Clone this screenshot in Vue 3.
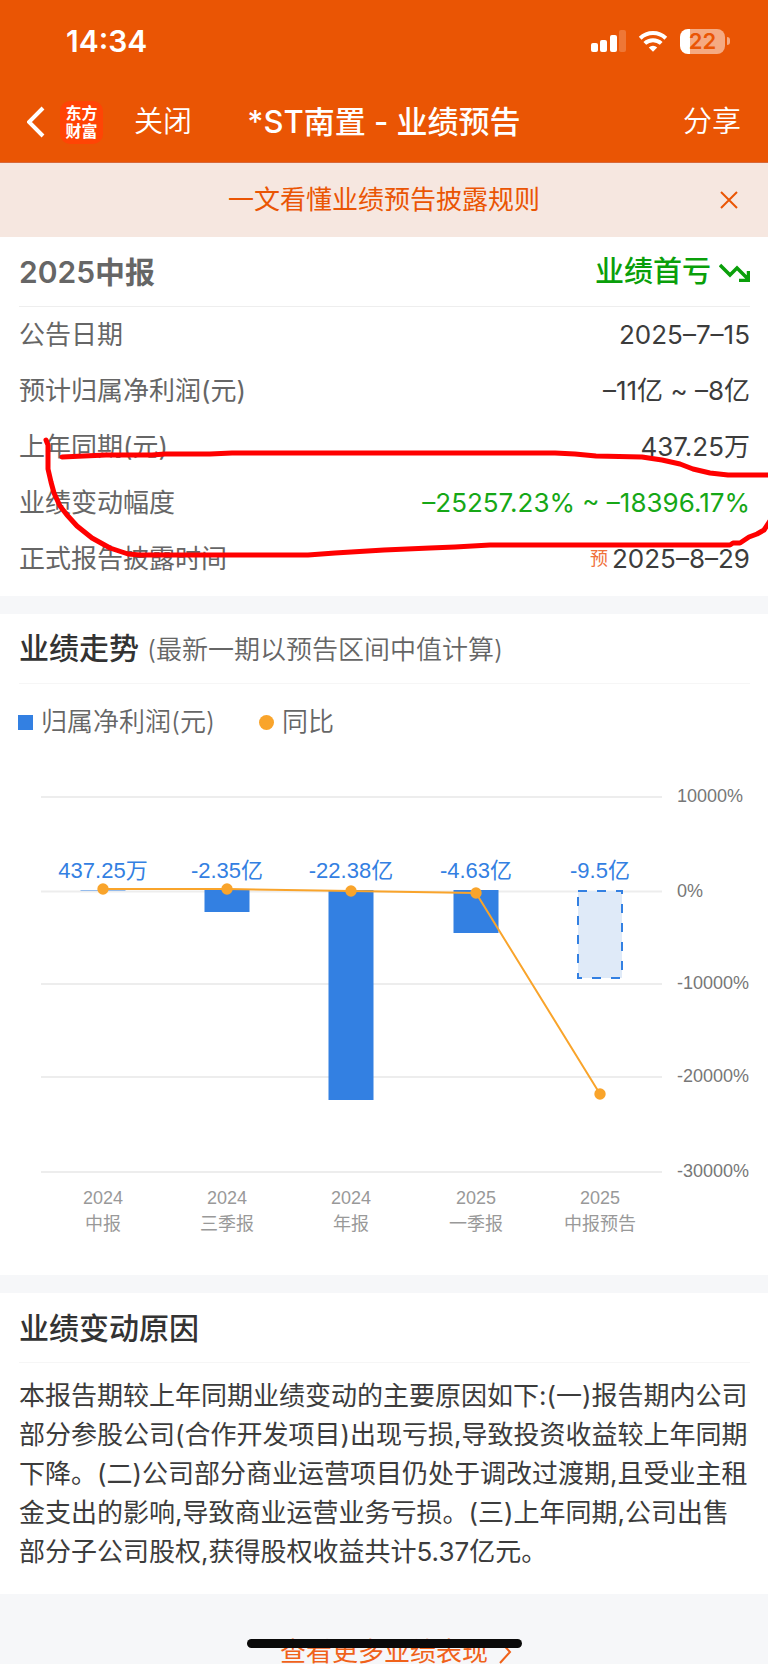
<template>
  <div class="page">
    <header class="header">
      <div class="status-bar">
        <span class="time">14:34</span>
        <div class="status-icons">
          <svg class="signal" viewBox="0 0 35 22" aria-hidden="true">
            <rect x="0" y="13" width="7" height="9" rx="2" />
            <rect x="9" y="10" width="7" height="12" rx="2" />
            <rect x="19" y="5" width="7" height="17" rx="2" />
            <rect x="28" y="0" width="7" height="22" rx="2" opacity="0.2" />
          </svg>
          <svg class="wifi" viewBox="0 0 30 22" aria-hidden="true">
            <path d="M2.2 8.2a18.5 18.5 0 0 1 25.6 0" />
            <path d="M6.8 13.4a12 12 0 0 1 16.4 0" />
            <path
              class="wifi-dot"
              d="M15 21.8l-4.2-4.3a6.1 6.1 0 0 1 8.4 0z"
            />
          </svg>
          <div class="battery">
            <div class="battery-body"><span>22</span></div>
            <div class="battery-cap"></div>
          </div>
        </div>
      </div>
      <nav class="nav">
        <div class="nav-left">
          <button class="icon-button" type="button" aria-label="返回">
            <svg class="back" viewBox="0 0 18 32" aria-hidden="true">
              <path d="M16 2L2 16l14 14" />
            </svg>
          </button>
          <div class="logo"><span>东方</span><span>财富</span></div>
          <button class="text-button" type="button">关闭</button>
        </div>
        <h1 class="nav-title">*ST南置 - 业绩预告</h1>
        <div class="nav-right">
          <button class="text-button" type="button">分享</button>
        </div>
      </nav>
    </header>

    <div class="banner">
      <a class="banner-link" href="#">一文看懂业绩预告披露规则</a>
      <button class="icon-button dismiss" type="button" aria-label="关闭提示">
        <svg viewBox="0 0 18 18" aria-hidden="true">
          <path d="M1 1l16 16M17 1L1 17" />
        </svg>
      </button>
    </div>

    <main>
      <section class="card summary">
        <div class="card-head">
          <h2 class="period">2025中报</h2>
          <div class="trend">
            <span>业绩首亏</span>
            <svg viewBox="0 0 31 20" aria-hidden="true">
              <path d="M1 3l10 10 7-7 12 12M29.5 9v9.5H20" />
            </svg>
          </div>
        </div>
        <dl class="rows">
          <div v-for="row in rows" :key="row.label" class="row">
            <dt>{{ row.label }}</dt>
            <dd :class="{ down: row.down }">
              <small v-if="row.tag">{{ row.tag }}</small>{{ row.value }}
            </dd>
          </div>
        </dl>
        <!-- Hand drawn circle -->
        <svg
          class="marker"
          viewBox="0 237 768 359"
          preserveAspectRatio="none"
          aria-hidden="true"
        >
          <path
            d="M62 457L106 455H152L165 454H210L232 453H555L575 454L596 456L642 457L662 460L680 464L693 469L710 473L728 475H772"
          />
          <path
            d="M46 440L48 445V469L51 482L54 493L60 506L67 515L77 526L92 538L110 548L128 554L140 555H308L335 553L384 550L430 548L455 547L490 545H730L733 543H740L749 537L757 534L764 530L770 521"
          />
        </svg>
      </section>

      <section class="card">
        <div class="card-head light">
          <h2>业绩走势 <small>(最新一期以预告区间中值计算)</small></h2>
        </div>
        <ul class="legend">
          <li><i class="square"></i>归属净利润(元)</li>
          <li><i class="dot"></i>同比</li>
        </ul>
        <svg class="chart" viewBox="0 0 768 515" role="img">
          <g v-for="tick in ticks" :key="tick.label">
            <line class="grid" x1="41" x2="662" :y1="tick.y" :y2="tick.y" />
            <text class="tick" x="677" :y="tick.y + 5">{{ tick.label }}</text>
          </g>
          <g v-for="(item, i) in items" :key="i">
            <rect
              :class="['bar', { forecast: item.forecast }]"
              :x="item.x - (item.forecast ? 22 : 22.5)"
              :y="item.forecast ? 131 : 130"
              :width="item.forecast ? 44 : 45"
              :height="item.height"
            />
            <text class="value" :x="item.x" y="118">{{ item.value }}</text>
            <text class="category" :x="item.x" y="444">{{ item.year }}</text>
            <text class="category" :x="item.x" y="470">{{ item.name }}</text>
          </g>
          <polyline class="line" :points="linePoints" />
          <circle
            v-for="(item, i) in items"
            :key="'p' + i"
            class="point"
            :cx="item.x"
            :cy="item.point"
            r="5.7"
          />
        </svg>
      </section>

      <section class="card">
        <div class="card-head light">
          <h2>业绩变动原因</h2>
        </div>
        <p class="reason">{{ reason }}</p>
      </section>
    </main>

    <footer class="footer">
      <a class="more" href="#">
        查看更多业绩表现
        <svg viewBox="0 0 14 24" aria-hidden="true">
          <path d="M2 1l10 11L2 23" />
        </svg>
      </a>
    </footer>
    <div class="home-bar"></div>
  </div>
</template>

<script setup>
import { computed } from "vue";

const rows = [
  { label: "公告日期", value: "2025–7–15" },
  { label: "预计归属净利润(元)", value: "–11亿 ~ –8亿" },
  { label: "上年同期(元)", value: "437.25万" },
  { label: "业绩变动幅度", value: "–25257.23% ~ –18396.17%", down: true },
  { label: "正式报告披露时间", value: "2025–8–29", tag: "预" },
];

const ticks = [
  { label: "10000%", y: 37 },
  { label: "0%", y: 131.5 },
  { label: "-10000%", y: 224 },
  { label: "-20000%", y: 317 },
  { label: "-30000%", y: 412 },
];

const items = [
  { x: 103, year: "2024", name: "中报", value: "437.25万", height: 0.5, point: 129 },
  { x: 227, year: "2024", name: "三季报", value: "-2.35亿", height: 22, point: 129 },
  { x: 351, year: "2024", name: "年报", value: "-22.38亿", height: 210, point: 131 },
  { x: 476, year: "2025", name: "一季报", value: "-4.63亿", height: 43, point: 133 },
  { x: 600, year: "2025", name: "中报预告", value: "-9.5亿", height: 87, point: 334, forecast: true },
];

const linePoints = computed(() =>
  items.map((item) => `${item.x},${item.point}`).join(" ")
);

const reason =
  "本报告期较上年同期业绩变动的主要原因如下:(一)报告期内公司部分参股公司(合作开发项目)出现亏损,导致投资收益较上年同期下降。(二)公司部分商业运营项目仍处于调改过渡期,且受业主租金支出的影响,导致商业运营业务亏损。(三)上年同期,公司出售部分子公司股权,获得股权收益共计5.37亿元。";
</script>

<style>
body {
  margin: 0;
  background: #f6f7f9;
}
</style>

<style scoped>
.page {
  font-family: Inter, "Noto Sans CJK SC", sans-serif;
  font-size: 26px;
  line-height: 36px;
  color: #3c3c3c;
}

h1,
h2,
p,
dl,
dd,
ul {
  margin: 0;
  padding: 0;
}

button {
  padding: 0;
  border: 0;
  background: none;
  color: inherit;
  font: inherit;
  cursor: pointer;
}

a {
  color: inherit;
  text-decoration: none;
}

svg {
  display: block;
  fill: none;
}

.header {
  background: #ea5504;
  border-bottom: 1px solid #d8693a;
  color: #fff;
}

.status-bar {
  display: flex;
  align-items: center;
  justify-content: space-between;
  height: 82px;
  padding: 0 38px 0 66px;
}

.time {
  font-size: 30px;
  font-weight: 600;
}

.status-icons {
  display: flex;
  align-items: center;
  gap: 12px;
}

.signal {
  width: 35px;
  height: 22px;
  fill: #fff;
}

.wifi {
  width: 30px;
  height: 22px;
  stroke: #fff;
  stroke-width: 4;
}

.wifi .wifi-dot {
  fill: #fff;
  stroke: none;
}

.battery {
  display: flex;
  align-items: center;
  gap: 2px;
}

.battery-body {
  width: 45px;
  height: 25px;
  border-radius: 8px;
  background: linear-gradient(to right, #fff 10px, #f5aa82 10px);
  color: #ea5504;
  font-size: 22px;
  font-weight: 600;
  line-height: 25px;
  text-align: center;
}

.battery-cap {
  width: 3px;
  height: 8px;
  border-radius: 0 4px 4px 0;
  background: #f5aa82;
}

.nav {
  display: grid;
  grid-template-columns: 1fr auto 1fr;
  align-items: center;
  height: 80px;
  padding: 0 27px;
}

.nav-left {
  display: flex;
  align-items: center;
}

.back {
  width: 18px;
  height: 32px;
  stroke: #fff;
  stroke-width: 4;
}

.logo {
  display: flex;
  flex-direction: column;
  align-items: center;
  justify-content: center;
  width: 43px;
  height: 43px;
  margin: 0 31px 0 15px;
  border-radius: 10px;
  background: #ff4405;
  font-size: 16px;
  font-weight: 700;
  line-height: 18px;
}

.text-button {
  font-size: 29px;
  font-weight: 350;
}

.nav-title {
  font-size: 31px;
  font-weight: 500;
  white-space: nowrap;
}

.nav-right {
  text-align: right;
}

.banner {
  display: flex;
  align-items: center;
  justify-content: center;
  position: relative;
  height: 74px;
  background: #f6e7e0;
  color: #ea5504;
}

.dismiss {
  position: absolute;
  right: 30px;
}

.dismiss svg {
  width: 18px;
  height: 18px;
  stroke: #ea5504;
  stroke-width: 2;
}

.card {
  margin-bottom: 18px;
  background: #fff;
}

.card-head {
  display: flex;
  align-items: center;
  justify-content: space-between;
  height: 69px;
  margin: 0 18px 0 19px;
  border-bottom: 1px solid #eee;
}

.card-head.light {
  border-color: #f6f6f6;
}

.card-head h2 {
  color: #333;
  font-size: 30px;
  font-weight: 500;
}

.card-head h2.period {
  color: #666;
  font-weight: 600;
}

.card-head small {
  color: #666;
  font-size: 26px;
  font-weight: 350;
}

.summary {
  position: relative;
}

.trend {
  display: flex;
  align-items: center;
  gap: 8px;
  color: #0a9f0a;
  font-size: 29px;
  font-weight: 500;
}

.trend svg {
  width: 31px;
  height: 20px;
  stroke: #0a9f0a;
  stroke-width: 3.5;
}

.rows {
  padding: 0 18px 9px 19px;
}

.row {
  display: flex;
  align-items: center;
  justify-content: space-between;
  height: 56px;
}

.row dt {
  color: #666;
}

.row .down {
  color: #16a716;
}

.row small {
  margin-right: 4px;
  color: #f0713a;
  font-size: 18px;
  line-height: 18px;
  vertical-align: 3px;
}

.marker {
  position: absolute;
  top: 0;
  left: 0;
  width: 100%;
  height: 100%;
  stroke: #f00;
  stroke-width: 5;
  stroke-linecap: round;
  stroke-linejoin: round;
  pointer-events: none;
}

.legend {
  display: flex;
  gap: 44px;
  height: 76px;
  padding: 0 18px;
  color: #666;
  font-weight: 350;
  list-style: none;
}

.legend li {
  display: flex;
  align-items: center;
  gap: 8px;
}

.square,
.dot {
  width: 15px;
  height: 15px;
  background: #3380e2;
}

.dot {
  border-radius: 50%;
  background: #f9a42b;
}

.chart {
  width: 100%;
  font-family: "Liberation Sans", "Noto Sans CJK SC", sans-serif;
}

.grid {
  stroke: #ededed;
  stroke-width: 2;
}

.tick {
  fill: #777;
  font-size: 18px;
}

.bar {
  fill: #3380e2;
}

.forecast {
  fill: #dfeaf8;
  stroke: #3380e2;
  stroke-width: 2;
  stroke-dasharray: 9 10;
}

.value {
  fill: #3380e2;
  font-size: 22px;
  text-anchor: middle;
}

.category {
  fill: #999;
  font-size: 18px;
  text-anchor: middle;
}

.line {
  stroke: #f9a42b;
  stroke-width: 2;
}

.point {
  fill: #f9a42b;
}

.reason {
  padding: 13px 18px 23px 19px;
  line-height: 39px;
}

.footer {
  display: flex;
  justify-content: center;
  padding-top: 28px;
}

.more {
  position: relative;
  color: #f0621a;
  line-height: 24px;
}

.more svg {
  position: absolute;
  top: 0;
  left: 100%;
  width: 14px;
  height: 24px;
  margin-left: 10px;
  stroke: #f0621a;
  stroke-width: 2;
}

.home-bar {
  position: fixed;
  bottom: 16px;
  left: 50%;
  width: 275px;
  height: 9px;
  margin-left: -137px;
  border-radius: 5px;
  background: #0a0a0a;
}
</style>
